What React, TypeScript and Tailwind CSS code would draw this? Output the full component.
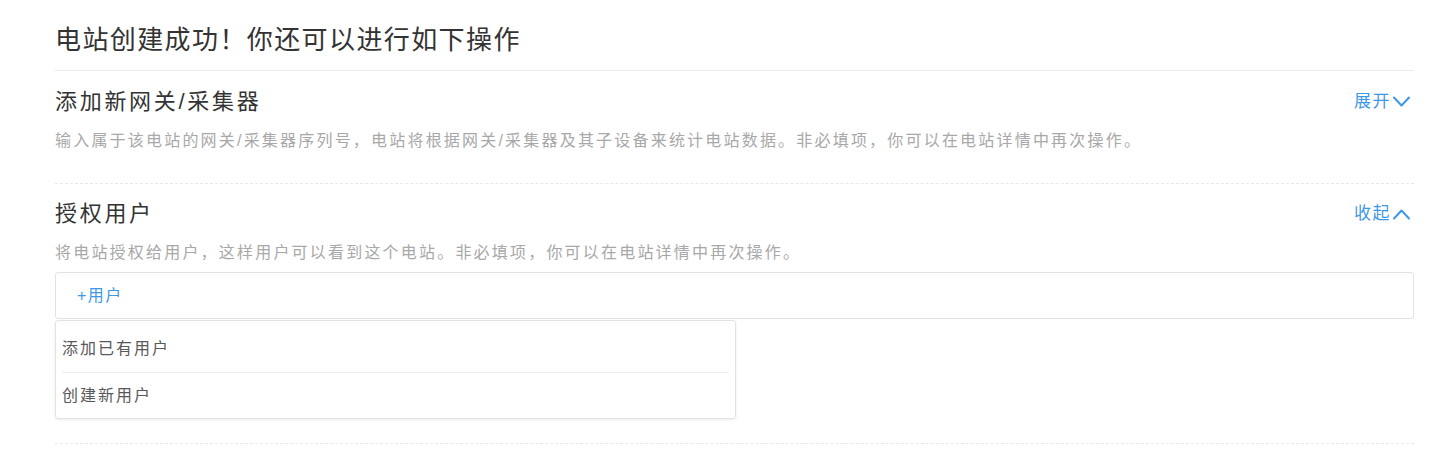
import React from "react";

const Chevron: React.FC<{ up?: boolean }> = ({ up }) => (
  <svg width="19" height="12" viewBox="0 0 19 12" className="ml-[1px]">
    <path
      d={up ? "M2 10.5 L9.5 2.5 L17 10.5" : "M2 1.5 L9.5 9.5 L17 1.5"}
      fill="none"
      stroke="#3f97e8"
      strokeWidth="2"
      strokeLinecap="round"
      strokeLinejoin="round"
    />
  </svg>
);

const Toggle: React.FC<{ label: string; up?: boolean }> = ({ label, up }) => (
  <button className="flex items-center pr-[3px] text-[17px] leading-[22px] tracking-[1.5px] text-[#3f97e8]">
    <span>{label}</span>
    <Chevron up={up} />
  </button>
);

const App: React.FC = () => {
  return (
    <div className="h-[451px] w-full bg-white pl-[55px] pr-[27px] font-['Liberation_Sans','Noto_Sans_CJK_SC',sans-serif]">
      <div className="h-[71px] border-b border-[#ebebeb] pt-[24px]">
        <h1 className="text-[26px] leading-[32px] tracking-[1.4px] text-[#333]">
          电站创建成功！你还可以进行如下操作
        </h1>
      </div>

      <section className="border-b border-dashed border-[#e8e8e8] pt-[17px] pb-[31px]">
        <div className="flex items-center justify-between">
          <h2 className="text-[22px] leading-[28px] tracking-[2.7px] text-[#333]">添加新网关/采集器</h2>
          <Toggle label="展开" />
        </div>
        <p className="mt-[14px] text-[16px] leading-[22px] tracking-[2.2px] text-[#a8a8a8]">
          输入属于该电站的网关/采集器序列号，电站将根据网关/采集器及其子设备来统计电站数据。非必填项，你可以在电站详情中再次操作。
        </p>
      </section>

      <section className="border-b border-dashed border-[#e8e8e8] pt-[16px] pb-[24px]">
        <div className="flex items-center justify-between">
          <h2 className="text-[22px] leading-[28px] tracking-[2.7px] text-[#333]">授权用户</h2>
          <Toggle label="收起" up />
        </div>
        <p className="mt-[14px] text-[16px] leading-[22px] tracking-[2.2px] text-[#a8a8a8]">
          将电站授权给用户，这样用户可以看到这个电站。非必填项，你可以在电站详情中再次操作。
        </p>
        <div className="mt-[8px] flex h-[47px] items-center rounded-[3px] border border-[#e3e3e3] pl-[21px]">
          <span className="text-[16px] leading-[22px] tracking-[1.5px] text-[#3f97e8]">+用户</span>
        </div>
        <div className="mt-[1px] w-[681px] rounded-[3px] border border-[#e3e3e3] shadow-[0_1px_3px_rgba(0,0,0,0.08)]">
          <div className="h-[51px] pl-[6px] pt-[17px] text-[16px] leading-[22px] tracking-[2px] text-[#595959]">
            添加已有用户
          </div>
          <div className="mx-[6px] h-px bg-[#efefef]" />
          <div className="h-[45px] pl-[6px] pt-[12px] text-[16px] leading-[22px] tracking-[2px] text-[#595959]">
            创建新用户
          </div>
        </div>
      </section>
    </div>
  );
};

export default App;
